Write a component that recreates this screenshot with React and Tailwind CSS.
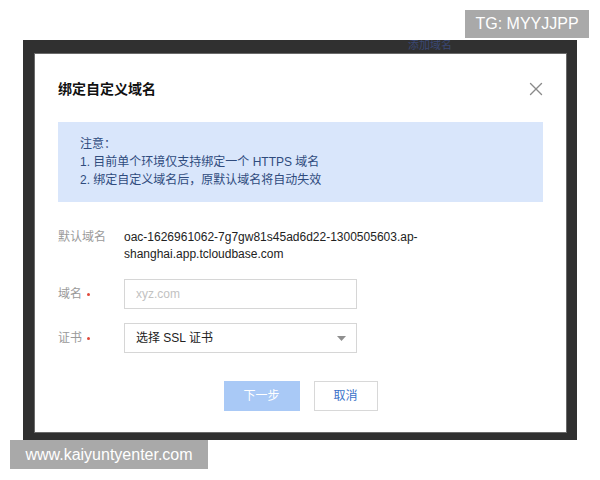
import { X } from 'lucide-react'

const font = { fontFamily: '"Liberation Sans", "Noto Sans CJK SC", sans-serif' }

function Field({ label, required, children }) {
  return (
    <div className="flex items-center">
      <div className="w-[66px] shrink-0 text-[12px] text-[#9a9a9a] flex items-center gap-[5px]">
        {label}
        {required && <span className="w-[3px] h-[3px] rounded-full bg-[#e0493b]" />}
      </div>
      {children}
    </div>
  )
}

function DomainDialog() {
  return (
    <div className="w-[533px] h-[380px] bg-white border border-[#6a6a6a] flex flex-col px-[23px] pt-[25px]">
      {/* Header */}
      <div className="flex items-center justify-between h-[20px]">
        <div className="text-[14px] leading-[20px] font-bold text-[#111]">绑定自定义域名</div>
        <button className="-mr-[4px] text-[#8a8a8a]">
          <X size={22} strokeWidth={1.5} />
        </button>
      </div>

      {/* Notice */}
      <div className="mt-[23px] bg-[#d9e6fb] pl-[22px] py-[13px] text-[12px] leading-[18px] text-[#2f4b7d]">
        <div>注意：</div>
        <div>1. 目前单个环境仅支持绑定一个 HTTPS 域名</div>
        <div>2. 绑定自定义域名后，原默认域名将自动失效</div>
      </div>

      {/* Form */}
      <div className="mt-[27px] flex">
        <div className="w-[66px] shrink-0 text-[12px] leading-[17px] text-[#9a9a9a]">默认域名</div>
        <div className="text-[12px] leading-[17px] text-[#222] w-[300px]">
          oac-1626961062-7g7gw81s45ad6d22-1300505603.ap-
          <br />
          shanghai.app.tcloudbase.com
        </div>
      </div>

      <div className="mt-[16px] flex flex-col gap-[14px]">
        <Field label="域名" required>
          <input
            placeholder="xyz.com"
            className="w-[233px] h-[30px] border border-[#d6d6d6] px-[11px] text-[12px] text-[#333] outline-none placeholder:text-[#c2c2c2]"
            style={font}
          />
        </Field>
        <Field label="证书" required>
          <div className="w-[233px] h-[30px] border border-[#d6d6d6] pl-[11px] pr-[10px] flex items-center justify-between text-[12px] text-[#222]">
            <span>选择 SSL 证书</span>
            <svg width="9" height="5" viewBox="0 0 9 5">
              <path d="M0 0h9L4.5 5z" fill="#8f8f8f" />
            </svg>
          </div>
        </Field>
      </div>

      {/* Actions */}
      <div className="mt-[28px] flex justify-center gap-[14px]">
        <button className="w-[76px] h-[30px] bg-[#a9c9f6] text-white text-[12px]">下一步</button>
        <button className="w-[64px] h-[30px] border border-[#d8d8d8] bg-white text-[#3a72c9] text-[12px]">取消</button>
      </div>
    </div>
  )
}

export default function App() {
  return (
    <div className="relative w-[600px] h-[480px] bg-white overflow-hidden" style={font}>
      <div className="pt-[40px] pl-[23px]">
        <div className="w-[554px] h-[400px] bg-[#303030] flex flex-col pl-[11px]">
          {/* page underneath the overlay */}
          <div className="h-[13px] overflow-hidden pl-[374px] text-[11px] leading-[11px] text-[#3a4875]">添加域名</div>
          <DomainDialog />
        </div>
      </div>

      <div className="absolute left-[465px] top-[10px] w-[124px] h-[28px] bg-[#a9a9a9] text-white text-[16px] flex items-center justify-center">
        TG: MYYJJPP
      </div>
      <div className="absolute left-[10px] top-[440px] w-[198px] h-[29px] bg-[#a9a9a9] text-white text-[16px] flex items-center justify-center">
        www.kaiyuntyenter.com
      </div>
    </div>
  )
}
